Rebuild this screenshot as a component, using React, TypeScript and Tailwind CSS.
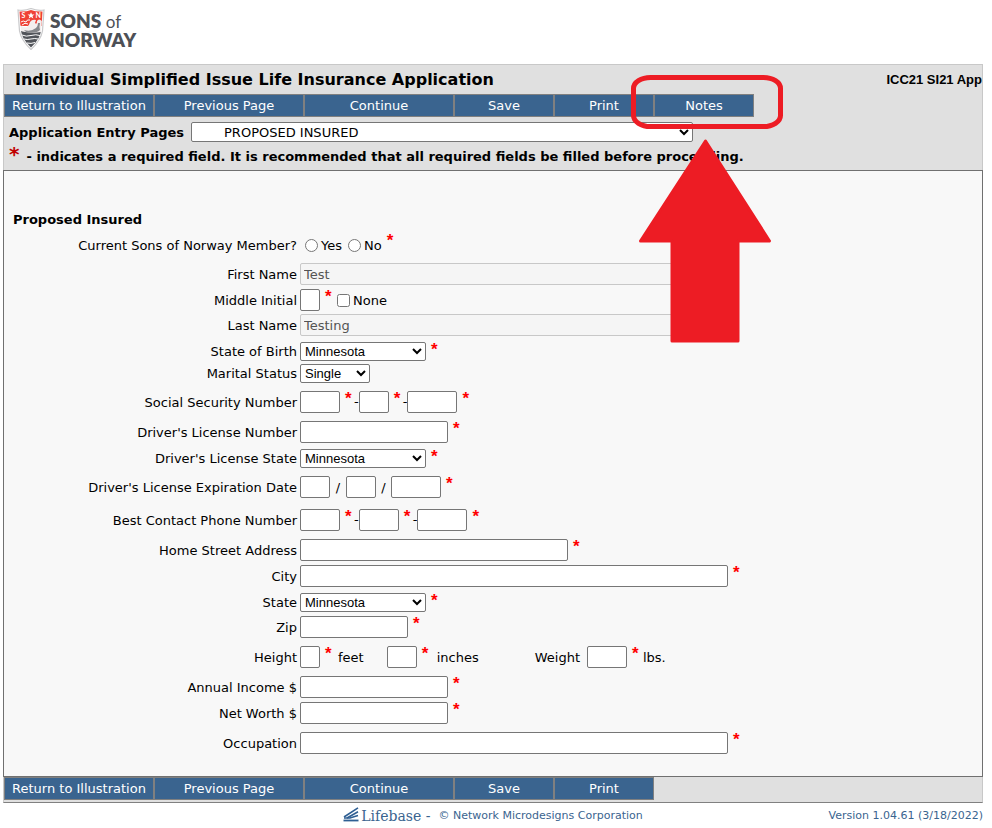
import type { ReactNode } from "react";

const STATES = ["Iowa", "Minnesota", "North Dakota", "South Dakota", "Wisconsin"];

function Toolbar({ notes }: { notes?: boolean }) {
  return (
    <div className="flex">
      <BarButton wide>Return to Illustration</BarButton>
      <BarButton wide>Previous Page</BarButton>
      <BarButton wide>Continue</BarButton>
      <BarButton>Save</BarButton>
      <BarButton>Print</BarButton>
      {notes && <BarButton>Notes</BarButton>}
    </div>
  );
}

function BarButton({ wide, children }: { wide?: boolean; children: ReactNode }) {
  return (
    <button
      type="button"
      className={`h-[23px] shrink-0 border border-[#808080] bg-[#3a648f] text-[13px] leading-[20px] whitespace-nowrap text-white ${wide ? "w-[150px]" : "w-[100px]"}`}
    >
      {children}
    </button>
  );
}

function Star() {
  return (
    <span className="w-[14px] shrink-0 self-start pl-[5px] font-['Liberation_Sans',sans-serif] text-[17px] leading-[16px] font-bold text-[#ff0000]">
      *
    </span>
  );
}

function Row({ label, id, gap, children }: { label: string; id?: string; gap: string; children: ReactNode }) {
  return (
    <div className={`flex items-center ${gap}`}>
      {id ? (
        <label htmlFor={id} className="w-[293px] shrink-0 pt-px text-right">
          {label}
        </label>
      ) : (
        <span className="w-[293px] shrink-0 pt-[2px] text-right">{label}</span>
      )}
      <div className="flex flex-1 items-center pl-[3px]">{children}</div>
    </div>
  );
}

function Box({ id, name, width }: { id?: string; name?: string; width: string }) {
  return (
    <input
      type="text"
      id={id}
      aria-label={name}
      className={`h-[22px] shrink-0 rounded-[2px] border border-[#767676] bg-white px-1 ${width}`}
    />
  );
}

function Locked({ id, value }: { id: string; value: string }) {
  return (
    <input
      type="text"
      id={id}
      disabled
      defaultValue={value}
      className="h-[22px] w-[428px] shrink-0 rounded-[2px] border border-[#c8c8c8] bg-[#f5f5f5] px-[3px] text-[#545454]"
    />
  );
}

function Pick({ id, options, value, width }: { id: string; options: string[]; value: string; width: string }) {
  return (
    <select
      id={id}
      defaultValue={value}
      className={`h-[19px] shrink-0 rounded-[2px] border border-[#767676] bg-white font-['Liberation_Sans',sans-serif] text-[13px] ${width}`}
    >
      {options.map((o) => (
        <option key={o}>{o}</option>
      ))}
    </select>
  );
}

function Shield() {
  return (
    <svg viewBox="0 0 28 42" className="h-[42px] w-[28px]" aria-hidden="true">
      <path d="M1 2Q8 3 14 .5Q20 3 27 2L25.500 23Q24 32 14 41.500Q4 32 2.500 23Z" fill="#fff" stroke="#c9c9cb" strokeWidth="1.200" />
      <path d="M2.500 3.500Q9 4 14 2Q19 4 25.500 3.500L24.600 18H3.400Z" fill="#ef4136" />
      <path d="M4 23Q14 25 24 23Q23 31 14 39.500Q5 31 4 23Z" fill="#51545a" />
      <path d="M3.400 17Q6 20 10 19Q12 18 13 14Q15 11 19 12L18 15Q20 17 20 13Q22 10 24.800 13L24 24Q14 26 4 23Z" fill="#f3eeee" />
      <path d="M7 22Q14 24 19 20Q21 18 21 15L23 15Q22 19 23 22Q19 26 9 24Z" fill="#85878b" />
      <path d="M4 14Q6 12 9 14Q10 11 13 12M5 17Q8 14 11 16" fill="none" stroke="#fff" strokeWidth="1" />
      <path d="M5 27Q9 29 14 27.500Q19 26 23 27.500M7 31Q10 32 14 31Q18 30 21 31M10 35Q14 36 18 34.500" fill="none" stroke="#fff" strokeWidth="1" />
      <path d="M14 4.200L15 6.500H17.500L15.500 8L16.300 10.400L14 9L11.700 10.400L12.500 8L10.500 6.500H13Z" fill="#fff" />
      <text x="4.500" y="9.800" fontSize="7" fontWeight="700" fill="#fff" fontFamily="Lato, sans-serif">S</text>
      <text x="18.500" y="9.800" fontSize="7" fontWeight="700" fill="#fff" fontFamily="Lato, sans-serif">N</text>
    </svg>
  );
}

export default function App() {
  return (
    <div className="relative min-h-screen bg-white pr-[9px] pl-[3px] font-['DejaVu_Sans',Verdana,sans-serif] text-[13px] leading-[16px] text-black">
      <header className="flex h-[64px] items-start gap-1 pt-[8px] pl-[14px]">
        <Shield />
        <div className="pt-[4px] pl-[1px] font-['Lato',sans-serif] text-[19px] leading-[18px] font-extrabold text-[#4d5056]">
          <div>
            SONS <span className="text-[17px] font-normal">of</span>
          </div>
          <div>NORWAY</div>
        </div>
      </header>

      <div className="border border-b-0 border-[#c8c8c8] bg-[#e0e0e0]">
        <div className="flex h-[29px] items-center justify-between pl-[11px]">
          <h1 className="pt-px text-[16px] font-bold">Individual Simplified Issue Life Insurance Application</h1>
          <span className="font-['Liberation_Sans',sans-serif] text-[13px] font-bold">ICC21 SI21 App</span>
        </div>
        <Toolbar notes />
        <div className="flex h-[30px] items-center gap-[7px] pl-[5px]">
          <label htmlFor="pages" className="pt-[2px] font-bold">
            Application Entry Pages
          </label>
          <select id="pages" className="h-[20px] w-[502px] rounded-[2px] border border-[#767676] bg-white pl-[28px]">
            <option>PROPOSED INSURED</option>
            <option>BENEFICIARY</option>
            <option>OWNER</option>
          </select>
        </div>
        <p className="flex h-[23px] items-start gap-[7px] pl-[5px] font-bold">
          <span className="text-[20px] leading-[14px] text-[#c00000]">*</span>
          <span className="pt-[2px]">
            - indicates a required field. It is recommended that all required fields be filled before proceeding.
          </span>
        </p>
      </div>

      <main className="border border-[#707070] bg-[#f8f8f8] pt-[41px] pb-[22px]">
        <h2 className="pl-[9px] font-bold">Proposed Insured</h2>
        <form>
          <Row label="Current Sons of Norway Member?" gap="mt-[5px]">
            <label className="flex h-[24px] items-center gap-[3px] pl-[5px]">
              <input type="radio" name="member" />
              <span className="pt-[2px]">Yes</span>
            </label>
            <label className="flex items-center gap-[3px] pl-[6px]">
              <input type="radio" name="member" />
              <span className="pt-[2px]">No</span>
            </label>
            <Star />
          </Row>
          <Row label="First Name" id="first" gap="mt-1.5">
            <Locked id="first" value="Test" />
          </Row>
          <Row label="Middle Initial" id="middle" gap="mt-1">
            <Box id="middle" width="w-[20px]" />
            <Star />
            <label className="flex items-center gap-[3px] pl-[3px]">
              <input type="checkbox" />
              <span className="pt-px">None</span>
            </label>
          </Row>
          <Row label="Last Name" id="last" gap="mt-[3px]">
            <Locked id="last" value="Testing" />
          </Row>
          <Row label="State of Birth" id="birth" gap="mt-1.5">
            <Pick id="birth" options={STATES} value="Minnesota" width="w-[126px]" />
            <Star />
          </Row>
          <Row label="Marital Status" id="marital" gap="mt-[3px]">
            <Pick id="marital" options={["Single", "Married", "Divorced"]} value="Single" width="w-[70px]" />
          </Row>
          <Row label="Social Security Number" id="ssn" gap="mt-2">
            <Box id="ssn" width="w-[40px]" />
            <Star />
            <span>-</span>
            <Box name="Social Security Number, middle" width="w-[30px]" />
            <Star />
            <span>-</span>
            <Box name="Social Security Number, last" width="w-[50px]" />
            <Star />
          </Row>
          <Row label="Driver's License Number" id="dl" gap="mt-2">
            <Box id="dl" width="w-[148px]" />
            <Star />
          </Row>
          <Row label="Driver's License State" id="dlstate" gap="mt-1.5">
            <Pick id="dlstate" options={STATES} value="Minnesota" width="w-[126px]" />
            <Star />
          </Row>
          <Row label="Driver's License Expiration Date" id="exp" gap="mt-2">
            <Box id="exp" width="w-[30px]" />
            <span className="w-[16px] pt-px text-center">/</span>
            <Box name="Expiration day" width="w-[30px]" />
            <span className="w-[15px] pt-px text-center">/</span>
            <Box name="Expiration year" width="w-[50px]" />
            <Star />
          </Row>
          <Row label="Best Contact Phone Number" id="phone" gap="mt-[11px]">
            <Box id="phone" width="w-[40px]" />
            <Star />
            <span>-</span>
            <Box name="Phone prefix" width="w-[40px]" />
            <Star />
            <span>-</span>
            <Box name="Phone line number" width="w-[50px]" />
            <Star />
          </Row>
          <Row label="Home Street Address" id="street" gap="mt-2">
            <Box id="street" width="w-[268px]" />
            <Star />
          </Row>
          <Row label="City" id="city" gap="mt-1">
            <Box id="city" width="w-[428px]" />
            <Star />
          </Row>
          <Row label="State" id="state" gap="mt-1.5">
            <Pick id="state" options={STATES} value="Minnesota" width="w-[126px]" />
            <Star />
          </Row>
          <Row label="Zip" id="zip" gap="mt-1">
            <Box id="zip" width="w-[108px]" />
            <Star />
          </Row>
          <Row label="Height" id="feet" gap="mt-2">
            <Box id="feet" width="w-[20px]" />
            <Star />
            <span className="pt-px pr-[23px] pl-[4px]">feet</span>
            <Box name="Height, inches" width="w-[30px]" />
            <Star />
            <span className="pt-px pl-[6px]">inches</span>
            <label htmlFor="weight" className="pt-px pr-[7px] pl-[56px]">
              Weight
            </label>
            <Box id="weight" width="w-[40px]" />
            <Star />
            <span className="pt-px pl-[2px]">lbs.</span>
          </Row>
          <Row label="Annual Income $" id="income" gap="mt-2">
            <Box id="income" width="w-[148px]" />
            <Star />
          </Row>
          <Row label="Net Worth $" id="worth" gap="mt-1">
            <Box id="worth" width="w-[148px]" />
            <Star />
          </Row>
          <Row label="Occupation" id="job" gap="mt-2">
            <Box id="job" width="w-[428px]" />
            <Star />
          </Row>
        </form>
      </main>

      <div className="border-x border-b border-x-[#c8c8c8] border-b-[#808080] bg-[#e0e0e0] pb-[2px]">
        <Toolbar />
      </div>

      <footer className="grid grid-cols-[1fr_auto_1fr] items-center pt-[3px] text-[11px] leading-[20px] text-[#3a648f]">
        <div />
        <div className="flex items-center">
          <svg viewBox="0 0 17 15" className="mb-[3px] h-[15px] w-[17px] shrink-0" fill="none" stroke="#2f5f93" aria-hidden="true">
            <path d="M1 10L15 .8M4 11L15 4.800" strokeWidth="1.600" />
            <path d="M1 11H7L15 8.500" strokeWidth="1.600" />
            <path d="M.5 13.500H15.500" strokeWidth="1.800" />
          </svg>
          <span className="pl-px font-['DejaVu_Serif',serif] text-[14px]">Lifebase&nbsp;-</span>
          <span className="pl-[8px]">© Network Microdesigns Corporation</span>
        </div>
        <div className="text-right">Version 1.04.61 (3/18/2022)</div>
      </footer>

      <svg
        viewBox="0 0 152 268"
        className="pointer-events-none absolute top-[75px] left-[631px] h-[268px] w-[152px]"
        aria-hidden="true"
      >
        <rect x="2.500" y="2.500" width="147" height="49" rx="17" ry="11" fill="none" stroke="#ed1c24" strokeWidth="5" />
        <path
          d="M74.500 66L138.500 166H107V266H41V166H9.500Z"
          fill="#ed1c24"
          stroke="#ed1c24"
          strokeWidth="3"
          strokeLinejoin="round"
        />
      </svg>
    </div>
  );
}
